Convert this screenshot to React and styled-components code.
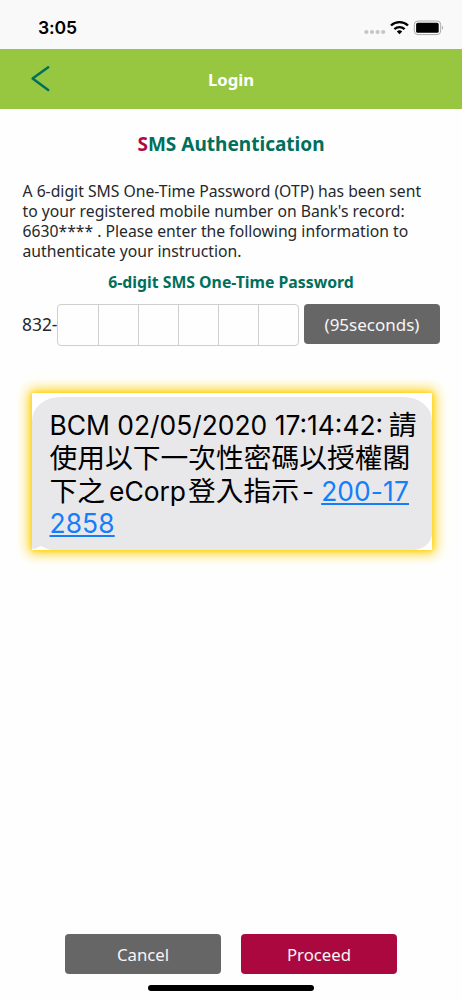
import React from "react";
import styled, { createGlobalStyle } from "styled-components";

const GlobalStyle = createGlobalStyle`
  * { box-sizing: border-box; }
  body { margin: 0; background: #fefefe; }
`;

const Screen = styled.div`
  width: 462px;
  height: 1000px;
  display: flex;
  flex-direction: column;
  overflow: hidden;
  background: #fefefe;
  color: #25282c;
  font-family: "Noto Sans", sans-serif;
`;

const StatusBar = styled.div`
  height: 49px;
  flex: none;
  display: flex;
  align-items: center;
  justify-content: space-between;
  padding: 6px 19px 0 38px;
  background: #f9f9f9;
`;

const Clock = styled.span`
  font: 600 17.6px/22px Inter, sans-serif;
  letter-spacing: -0.1px;
  color: #000;
`;

const StatusIcons = styled.svg`
  display: block;
  width: 80px;
  height: 18px;
`;

const Header = styled.header`
  height: 60px;
  flex: none;
  display: grid;
  grid-template-columns: 80px 1fr 80px;
  align-items: center;
  background: #97c640;
`;

const BackIcon = styled.svg`
  display: block;
  width: 20px;
  height: 28px;
  margin-left: 30px;
`;

const HeaderTitle = styled.h1`
  margin: 2px 0 0;
  text-align: center;
  font-size: 16.7px;
  line-height: 22px;
  font-weight: 700;
  color: #fff;
`;

const Content = styled.main`
  flex: 1;
  display: flex;
  flex-direction: column;
`;

const Title = styled.h2`
  margin: 22px 0 0;
  text-align: center;
  font-size: 19.05px;
  line-height: 26px;
  font-weight: 700;
  color: #006f5b;
`;

const Accent = styled.span`
  color: #b00a42;
`;

const Notice = styled.p`
  margin: 24px 0 0 22.5px;
  font-size: 15.72px;
  line-height: 20px;
`;

const Line = styled.span`
  display: block;
  height: ${(p) => p.$height || "20px"};
  white-space: nowrap;
`;

const FieldLabel = styled.h3`
  margin: 11px 0 0;
  text-align: center;
  font-size: 15.8px;
  line-height: 20px;
  font-weight: 700;
  color: #006f5b;
`;

const OtpRow = styled.div`
  display: flex;
  align-items: flex-start;
  margin: 12px 22px 0;
`;

const Prefix = styled.span`
  width: 35px;
  font-size: 17.4px;
  line-height: 40px;
  white-space: nowrap;
`;

const OtpBoxes = styled.div`
  display: grid;
  grid-template-columns: repeat(6, 1fr);
  width: 242px;
  height: 42px;
  border: 1px solid #cfcfcf;
  border-radius: 4px;
`;

const OtpBox = styled.span`
  & + & { border-left: 1px solid #cfcfcf; }
`;

const Button = styled.button`
  width: ${(p) => p.$width};
  height: 40px;
  margin: 0 0 0 ${(p) => p.$gap || "0"};
  padding: 2px 0 0;
  border: 0;
  border-radius: 4px;
  background: ${(p) => (p.$primary ? "#ab0840" : "#666")};
  color: #f7f5f6;
  font: 400 ${(p) => p.$size || "16.8px"}/22px "Noto Sans", sans-serif;
`;

const MessageCard = styled.section`
  width: 400px;
  height: 157px;
  flex: none;
  margin: 47px 0 0 32px;
  padding-top: 4px;
  overflow: hidden;
  background: #fff;
  box-shadow: 0 0 12px 3px #ffd000, 0 0 4px 0 #ffd000;
`;

const Bubble = styled.div`
  position: relative;
  height: 153px;
  padding: 12px 0 0 17.5px;
  border-radius: 28px 28px 20px 4px / 24px 24px 16px 3px;
  background: #e8e8ea;
  color: #000;
  font: 400 26.4px/33px Inter, "Noto Sans CJK TC", sans-serif;
`;

const Han = styled.span`
  font-size: 27.75px;
  line-height: 20px;
  margin-left: ${(p) => p.$gap || "0"};
`;

const Word = styled.span`
  margin-left: ${(p) => p.$gap || "0"};
`;

const Tail = styled.svg`
  position: absolute;
  left: 0;
  bottom: 0;
  width: 18px;
  height: 4px;
`;

const Code = styled.a`
  margin-left: ${(p) => p.$gap || "0"};
  letter-spacing: 0.1px;
  color: #147efb;
  text-decoration: underline;
  text-decoration-thickness: 1.5px;
  text-underline-offset: 2px;
`;

const Footer = styled.footer`
  display: flex;
  flex-direction: column;
  height: 66px;
`;

const Actions = styled.div`
  display: flex;
  padding-left: 65px;
`;

const HomeIndicator = styled.div`
  width: 166px;
  height: 6px;
  margin: 11px auto 0;
  border-radius: 3px;
  background: #000;
`;

export default function App() {
  return (
    <Screen>
      <GlobalStyle />
      <StatusBar>
        <Clock>3:05</Clock>
        <StatusIcons viewBox="0 0 80 18">
          <g fill="#c6c6c6">
            <circle cx="3.4" cy="13" r="2.1" />
            <circle cx="9" cy="13" r="2.1" />
            <circle cx="14.6" cy="13" r="2.1" />
            <circle cx="20.2" cy="13" r="2.1" />
          </g>
          <g fill="none" stroke="#000" strokeWidth="2.4">
            <path d="M28 6.5a12.4 12.4 0 0 1 17 0" />
            <path d="M31.4 10.1a7.5 7.5 0 0 1 10.2 0" />
          </g>
          <path d="M36.5 15.2l-2.7-2.8a4 4 0 0 1 5.4 0z" />
          <rect x="51.3" y="2" width="26.4" height="13.6" rx="3.6" fill="none" stroke="#aaa" />
          <rect x="53.1" y="3.8" width="22.6" height="10" rx="1.6" />
          <path d="M79 6.8q1.8 2 0 4z" fill="#999" />
        </StatusIcons>
      </StatusBar>
      <Header>
        <BackIcon viewBox="0 0 20 28" fill="none" stroke="#00705c" strokeWidth="2.5" strokeLinecap="round" strokeLinejoin="round">
          <path d="M18.2 2.2L2.6 13.6L18.2 25" />
        </BackIcon>
        <HeaderTitle>Login</HeaderTitle>
      </Header>
      <Content>
        <Title><Accent>S</Accent>MS Authentication</Title>
        <Notice>
          <Line>A 6-digit SMS One-Time Password (OTP) has been sent</Line>
          <Line>to your registered mobile number on Bank's record:</Line>
          <Line>6630**** . Please enter the following information to</Line>
          <Line>authenticate your instruction.</Line>
        </Notice>
        <FieldLabel>6-digit SMS One-Time Password</FieldLabel>
        <OtpRow>
          <Prefix>832-</Prefix>
          <OtpBoxes>
            {[0, 1, 2, 3, 4, 5].map((i) => <OtpBox key={i} />)}
          </OtpBoxes>
          <Button $width="136px" $gap="5px" $size="17px">(95seconds)</Button>
        </OtpRow>
        <MessageCard>
          <Bubble>
            <Line $height="33px">BCM 02/05/2020 17:14:42:<Han $gap="5.5px">請</Han></Line>
            <Line $height="33px"><Han>使用以下一次性密碼以授權閣</Han></Line>
            <Line $height="32px">
              <Han>下之</Han><Word $gap="4px">eCorp</Word><Han $gap="2px">登入指示</Han><Word $gap="3px">-</Word><Code $gap="7px">200-17</Code>
            </Line>
            <Line $height="33px"><Code>2858</Code></Line>
            <Tail viewBox="0 0 18 4"><path d="M0 4L9 0L18 4Z" fill="#fff" /></Tail>
          </Bubble>
        </MessageCard>
      </Content>
      <Footer>
        <Actions>
          <Button $width="156px">Cancel</Button>
          <Button $primary $width="156px" $gap="20px">Proceed</Button>
        </Actions>
        <HomeIndicator />
      </Footer>
    </Screen>
  );
}
